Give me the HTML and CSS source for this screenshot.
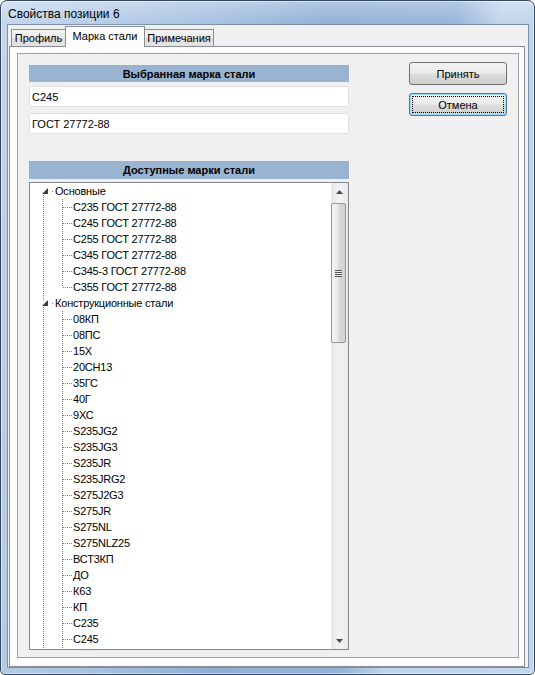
FILE: index.html
```html
<!DOCTYPE html>
<html lang="ru">

<head>
   <meta charset="UTF-8">
   <title>Свойства позиции 6</title>
   <link rel="stylesheet" href="styles.css">
</head>

<body>
   <div class="window">
      <div class="titlebar">Свойства позиции 6</div>
      <div class="client">
         <div class="tabs">
            <div class="tab tab-profile">Профиль</div>
            <div class="tab tab-active">Марка стали</div>
            <div class="tab tab-notes">Примечания</div>
         </div>
         <div class="tab-page">
            <div class="group">
               <div class="left-col">
                  <div class="caption">Выбранная марка стали</div>
                  <div class="field field-first">С245</div>
                  <div class="field">ГОСТ 27772-88</div>
                  <div class="caption caption-list">Доступные марки стали</div>
                  <div class="tree">
                     <div class="tree-list">
                        <div class="node-root">
                           <svg class="expander" width="6" height="6" viewBox="0 0 6 6">
                              <polygon points="6,0 6,6 0,6" fill="#3f3f3f"/>
                           </svg>
                           <span class="root-dot"></span>
                           <span>Основные</span>
                        </div>
                        <div class="children">
                           <div class="node">С235 ГОСТ 27772-88</div>
                           <div class="node">С245 ГОСТ 27772-88</div>
                           <div class="node">С255 ГОСТ 27772-88</div>
                           <div class="node">С345 ГОСТ 27772-88</div>
                           <div class="node">С345-3 ГОСТ 27772-88</div>
                           <div class="node">С355 ГОСТ 27772-88</div>
                        </div>
                        <div class="node-root">
                           <svg class="expander" width="6" height="6" viewBox="0 0 6 6">
                              <polygon points="6,0 6,6 0,6" fill="#3f3f3f"/>
                           </svg>
                           <span class="root-dot"></span>
                           <span>Конструкционные стали</span>
                        </div>
                        <div class="children children-open">
                           <div class="node">08КП</div>
                           <div class="node">08ПС</div>
                           <div class="node">15Х</div>
                           <div class="node">20СН13</div>
                           <div class="node">35ГС</div>
                           <div class="node">40Г</div>
                           <div class="node">9ХС</div>
                           <div class="node">S235JG2</div>
                           <div class="node">S235JG3</div>
                           <div class="node">S235JR</div>
                           <div class="node">S235JRG2</div>
                           <div class="node">S275J2G3</div>
                           <div class="node">S275JR</div>
                           <div class="node">S275NL</div>
                           <div class="node">S275NLZ25</div>
                           <div class="node">ВСТ3КП</div>
                           <div class="node">ДО</div>
                           <div class="node">К63</div>
                           <div class="node">КП</div>
                           <div class="node">С235</div>
                           <div class="node">С245</div>
                        </div>
                     </div>
                     <div class="scrollbar">
                        <div class="sb-button">
                           <svg width="7" height="4" viewBox="0 0 7 4"><polygon points="3.5,0 7,4 0,4" fill="#4a4a4a"/></svg>
                        </div>
                        <div class="sb-thumb"><div class="sb-grip"></div></div>
                        <div class="sb-button sb-down">
                           <svg width="7" height="4" viewBox="0 0 7 4"><polygon points="0,0 7,0 3.5,4" fill="#4a4a4a"/></svg>
                        </div>
                     </div>
                  </div>
               </div>
               <div class="right-col">
                  <button class="btn">Принять</button>
                  <button class="btn btn-focus"><span class="focus-rect">Отмена</span></button>
               </div>
            </div>
         </div>
      </div>
   </div>
</body>

</html>
```

FILE: styles.css
```css
body {
   margin: 0;
   font-family: "Liberation Sans", Arial, sans-serif;
   font-size: 11px;
   color: #000;
}

.window {
   width: 535px;
   height: 675px;
   box-sizing: border-box;
   display: flex;
   flex-direction: column;
   overflow: hidden;
   border: 1px solid #34495f;
   border-radius: 7px 7px 5px 5px;
   box-shadow: inset 0 0 0 1px rgba(255, 255, 255, 0.45);
   background:
      linear-gradient(to bottom, rgba(255, 255, 255, 0.3), rgba(255, 255, 255, 0) 24px),
      linear-gradient(100deg, #c3d6ed 0%, #a9c3e1 30%, #90b0d6 50%, #93b3d8 70%, #c0d4ea 77%, #c3d6ec 100%);
}

.titlebar {
   flex-shrink: 0;
   height: 23px;
   padding: 2px 0 0 7px;
   box-sizing: border-box;
   display: flex;
   align-items: center;
   font-size: 12px;
}

.client {
   flex: 1;
   min-height: 0;
   display: flex;
   flex-direction: column;
   margin: 0 5px 6px 6px;
   padding: 0 3px 0 1px;
   border: 1px solid #7b90a9;
   background: #f0f0f0;
}

/* tab strip */
.tabs {
   flex-shrink: 0;
   height: 21px;
   display: flex;
   align-items: flex-end;
   padding-left: 2px;
}

.tab {
   box-sizing: border-box;
   height: 17px;
   display: flex;
   align-items: center;
   justify-content: center;
   border: 1px solid #898c95;
   border-bottom: none;
   background: linear-gradient(#f3f3f3, #ebebeb 50%, #dddddd 50%, #e4e4e4);
}

.tab-profile {
   width: 55px;
}

.tab-active {
   position: relative;
   z-index: 1;
   width: 80px;
   height: 21px;
   margin: 0 -1px -1px -1px;
   padding-bottom: 2px;
   background: #fcfcfc;
}

.tab-notes {
   width: 70px;
}

.tab-page {
   flex: 1;
   min-height: 0;
   display: flex;
   padding: 6px 5px 8px 7px;
   border: 1px solid #898c95;
   background: #fcfcfc;
}

.group {
   flex: 1;
   min-height: 0;
   display: flex;
   padding: 8px 0 7px 11px;
   border: 1px solid #a0a0a0;
   background: #f0f0f0;
}

.left-col {
   width: 320px;
   min-height: 0;
   display: flex;
   flex-direction: column;
   padding-top: 3px;
}

.caption {
   flex-shrink: 0;
   height: 17px;
   display: flex;
   align-items: center;
   justify-content: center;
   background: #99b4d1;
   font-weight: bold;
}

.caption-list {
   height: 18px;
   margin-top: 27px;
}

.field {
   flex-shrink: 0;
   box-sizing: border-box;
   height: 21px;
   margin-top: 6px;
   padding-left: 2px;
   display: flex;
   align-items: center;
   border: 1px solid #e1e1e1;
   border-radius: 2px;
   background: #fff;
}

.field-first {
   margin-top: 4px;
}

/* tree view */
.tree {
   flex: 1;
   min-height: 0;
   margin-top: 3px;
   display: flex;
   border: 1px solid #828790;
   background: #fff;
   overflow: hidden;
}

.tree-list {
   flex: 1;
   overflow: hidden;
   letter-spacing: -0.2px;
   background: repeating-linear-gradient(#808080 0 1px, transparent 1px 2px) 13px 12px / 1px 100% no-repeat;
}

.node-root {
   height: 16px;
   display: flex;
   align-items: center;
   padding-left: 12px;
}

.expander {
   background: #fff;
}

.root-dot {
   width: 1px;
   height: 1px;
   margin: 0 2px 0 4px;
   background: #808080;
}

.children {
   background: repeating-linear-gradient(#808080 0 1px, transparent 1px 2px) 32px 0 / 1px calc(100% - 8px) no-repeat;
}

/* the open group runs on past the visible rows */
.children-open {
   background-size: 1px 100%;
   padding-bottom: 16px;
}

.node {
   height: 16px;
   display: flex;
   align-items: center;
   padding-left: 33px;
   white-space: nowrap;
}

.node::before {
   content: "";
   width: 9px;
   height: 1px;
   margin-right: 1px;
   background: repeating-linear-gradient(to right, #808080 0 1px, transparent 1px 2px);
}

.scrollbar {
   width: 17px;
   display: flex;
   flex-direction: column;
   background: linear-gradient(to right, #e6e6e6, #f1f1f1 40%, #f1f1f1 70%, #e8e8e8);
}

.sb-button {
   flex-shrink: 0;
   height: 17px;
   display: flex;
   align-items: center;
   justify-content: center;
}

.sb-down {
   margin-top: auto;
}

.sb-thumb {
   flex-shrink: 0;
   box-sizing: border-box;
   height: 140px;
   margin: 3px 2px 0 0;
   display: flex;
   align-items: center;
   justify-content: center;
   border: 1px solid #979797;
   border-radius: 2px;
   background: linear-gradient(to right, #f5f5f5, #e9e9e9 45%, #d8d8d8 55%, #d2d2d2);
}

.sb-grip {
   width: 7px;
   height: 7px;
   background: repeating-linear-gradient(#555 0 1px, #ececec 1px 2px);
}

/* buttons */
.right-col {
   display: flex;
   flex-direction: column;
   gap: 8px;
   margin-left: 60px;
}

.btn {
   box-sizing: border-box;
   width: 98px;
   height: 23px;
   padding: 0;
   display: flex;
   align-items: center;
   justify-content: center;
   border: 1px solid #707070;
   border-radius: 3px;
   background: linear-gradient(#f2f2f2, #ebebeb 48%, #dddddd 52%, #cfcfcf);
   font-family: "Liberation Sans", Arial, sans-serif;
   font-size: 11px;
   color: #000;
}

.btn-focus {
   border-color: #3c7fb1;
   box-shadow: inset 0 0 0 1px #9fd9f7;
}

.focus-rect {
   align-self: stretch;
   flex: 1;
   margin: 2px;
   display: flex;
   align-items: center;
   justify-content: center;
   border: 1px dotted #000;
}
```
